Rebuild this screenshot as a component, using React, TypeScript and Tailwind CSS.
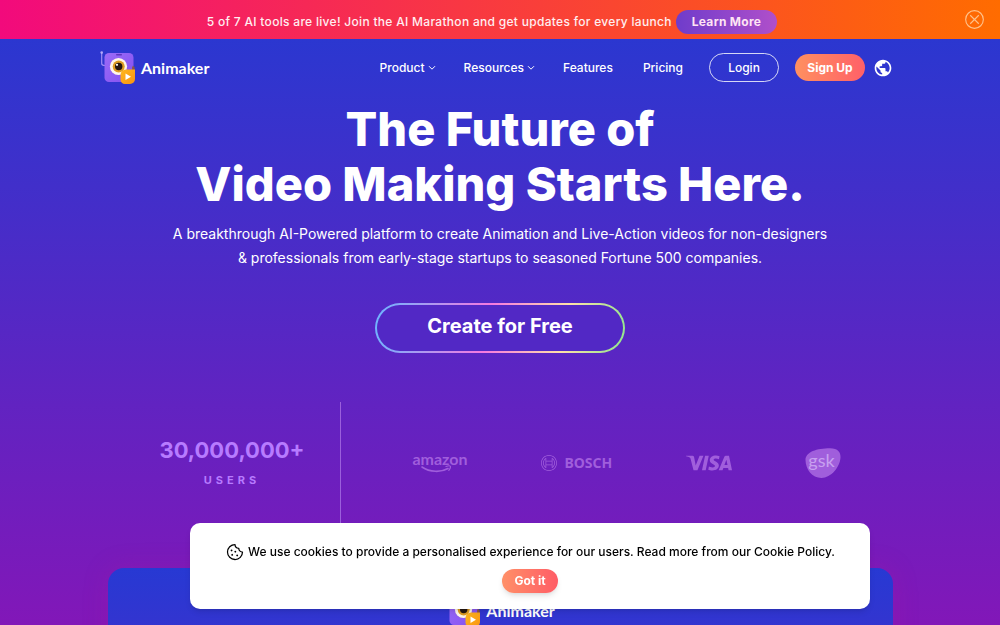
import { MdPublic } from "react-icons/md";
import { PiCookie } from "react-icons/pi";
import { SiVisa, SiBosch } from "react-icons/si";

function Chevron() {
  return (
    <svg viewBox="0 0 8 6" className="h-1.5 w-2" fill="none" stroke="currentColor" strokeWidth="1" aria-hidden="true">
      <path d="M1 1.2l3 3 3-3" />
    </svg>
  );
}

function Mascot() {
  return (
    <svg viewBox="0 0 36 36" className="size-9 shrink-0" aria-hidden="true">
      <defs>
        <linearGradient id="body" x1="0" y1="0" x2="1" y2="1">
          <stop offset="0" stopColor="#9b6bf8" />
          <stop offset="1" stopColor="#8450f0" />
        </linearGradient>
        <linearGradient id="play" x1="0" y1="0" x2="1" y2="1">
          <stop offset="0" stopColor="#ffb81c" />
          <stop offset="1" stopColor="#f99312" />
        </linearGradient>
      </defs>
      <path d="M1.7 3v10.500q0 2 3.300 2" fill="none" stroke="#9f8df5" strokeWidth="1.200" />
      <circle cx="1.700" cy="2.600" r="1.300" fill="#b5a8f8" />
      <rect x="4.500" y="3" width="29" height="29" rx="4.500" fill="url(#body)" />
      <rect x="16" y="4" width="6" height="1.500" rx=".7" fill="#5f35bd" />
      <circle cx="18.500" cy="16.500" r="8.600" fill="#fff6e8" />
      <circle cx="18.700" cy="16.500" r="6" fill="#dd9b22" />
      <circle cx="18.700" cy="16.500" r="3.700" fill="#241611" />
      <circle cx="17" cy="14.800" r="1.100" fill="#fff" />
      <path d="M33 15.500l1.600 2v3h-2.500v-3z" fill="#8a5648" />
      <path d="M26 19.500h9V29a5 5 0 0 1-5 5h-5a4.500 4.500 0 0 1-4.500-4.500V25a5.500 5.500 0 0 1 5.500-5.500z" fill="url(#play)" />
      <path d="M25.500 23.500l5.500 3.300-5.500 3.300z" fill="#fff" />
    </svg>
  );
}

function Logo() {
  return (
    <a href="#home" className="flex items-center gap-[5px] text-white">
      <Mascot />
      <span className="font-[Lato,sans-serif] text-base font-bold leading-5">Animaker</span>
    </a>
  );
}

function Amazon() {
  return (
    <div className="flex w-14 flex-col items-center" role="img" aria-label="amazon">
      <span className="font-[Lato,sans-serif] text-base leading-3 font-bold">amazon</span>
      <svg viewBox="0 0 56 8" className="h-2 w-14" fill="none" stroke="currentColor" strokeLinecap="round" aria-hidden="true">
        <path d="M10 2c8 5.500 19 5.500 26 1.500" strokeWidth="1.600" />
        <path d="M34 1.500c2-.7 4-.7 4.300-.2s-.3 2.500-1.500 4" strokeWidth="1.200" />
      </svg>
    </div>
  );
}

function Gsk() {
  return (
    <svg viewBox="0 0 36 30" className="h-[30px] w-9" role="img" aria-label="gsk">
      <path d="M.5 12C.5 4 12 .3 25 .3c8 0 10.700 4 10.500 9C35.200 19 26 30 16.500 30 7 30 .5 21 .5 12z" fill="currentColor" />
      <text x="16.500" y="19" textAnchor="middle" className="fill-[#c8a0f0] font-[Lato,sans-serif] text-[18px]">gsk</text>
    </svg>
  );
}

export default function App() {
  return (
    <div className="flex h-screen flex-col overflow-hidden bg-[#2b36cf] font-['Inter',sans-serif] text-white">
      <aside className="relative flex h-[39px] shrink-0 items-center justify-center bg-linear-to-r/srgb from-[#f20a7c] to-[#ff6c00] pt-1">
        <div className="flex items-center gap-1 pr-4">
          <p className="text-xs font-medium tracking-wide text-[#ffeef0]">
            5 of 7 AI tools are live! Join the AI Marathon and get updates for every launch
          </p>
          <a href="#marathon" className="flex h-6 items-center rounded-full bg-linear-to-r/srgb from-[#6f3ccb] to-[#b04fca] px-4 text-xs font-bold tracking-wide text-[#ffe4f4]">
            Learn More
          </a>
        </div>
        <button type="button" aria-label="Close announcement" className="absolute top-2.5 right-4">
          <svg viewBox="0 0 20 20" className="size-[19px]" fill="none" stroke="#ffc18a" strokeWidth="1.200" aria-hidden="true">
            <circle cx="10" cy="10" r="9.300" />
            <path d="M5.500 5.500l9 9m0-9l-9 9" />
          </svg>
        </button>
      </aside>

      <div className="flex min-h-0 flex-1 flex-col bg-linear-to-b/srgb from-[#2b37d0] to-[#8217b8]">
        <header className="flex h-[57px] shrink-0 items-center justify-between pr-[107px] pl-[100px]">
          <Logo />
          <nav className="flex items-center text-xs font-medium">
            <button type="button" className="mr-7 flex items-center gap-[3px]">Product <Chevron /></button>
            <button type="button" className="mr-7 flex items-center gap-[3px]">Resources <Chevron /></button>
            <a href="#features" className="mr-[30px]">Features</a>
            <a href="#pricing" className="mr-[26px]">Pricing</a>
            <a href="#login" className="mr-4 flex h-[29px] w-[70px] items-center justify-center rounded-full border border-white/80">Login</a>
            <a href="#signup" className="mr-2 flex h-[27px] w-[70px] items-center justify-center rounded-full bg-linear-to-r/srgb from-[#ff9060] to-[#ff6068] font-bold">Sign Up</a>
            <button type="button" aria-label="Language"><MdPublic className="size-5" /></button>
          </nav>
        </header>

        <main className="flex min-h-0 flex-1 flex-col">
          <section className="flex shrink-0 flex-col items-center pt-[5px] text-center">
            <h1 className="text-[47px] leading-[55px] font-extrabold">
              The Future of<br />Video Making Starts Here.
            </h1>
            <p className="mt-[11px] text-sm leading-6">
              A breakthrough AI-Powered platform to create Animation and Live-Action videos for non-designers
              <br />&amp; professionals from early-stage startups to seasoned Fortune 500 companies.
            </p>
            <a href="#create" className="mt-[33px] flex h-[50px] w-[250px] rounded-full bg-linear-[100deg,#6bb6ff,#f579e0_45%,#ffe0a8_75%,#8fe88c] p-0.5">
              <span className="flex flex-1 items-center justify-center rounded-full bg-[#5228c5] pb-1 text-xl font-bold">Create for Free</span>
            </a>
          </section>

          <section className="mx-auto mt-[49px] flex h-[132px] w-full max-w-[760px] shrink-0 text-[#a05edc]">
            <div className="flex w-[221px] shrink-0 flex-col items-center border-r border-[#9b5fdc] pt-[34px] pl-1 text-[#b77bff]">
              <p className="text-[22px] leading-7 font-bold">30,000,000+</p>
              <p className="mt-2 text-[11px] leading-4 font-bold tracking-[4px]">USERS</p>
            </div>
            <div className="flex h-[122px] flex-1 items-center justify-between pr-[39px] pl-[71px]">
              <Amazon />
              <div className="flex items-center gap-[7px]" role="img" aria-label="Bosch">
                <SiBosch className="size-4" />
                <span className="font-['Noto_Sans',sans-serif] text-sm leading-4 font-bold">BOSCH</span>
              </div>
              <SiVisa className="h-12 w-[46px]" aria-label="Visa" />
              <Gsk />
            </div>
          </section>

          <section className="mx-auto mt-[34px] flex h-[440px] w-[78.5%] shrink-0 justify-center rounded-2xl bg-linear-to-b/srgb from-[#2739d3] to-[#8217b8] pt-[25px] shadow-[0_0_24px_#b01c9c40]">
            <div><Logo /></div>
          </section>
        </main>
      </div>

      <aside aria-label="Cookie notice" className="fixed bottom-4 left-[19%] flex w-[68%] flex-col items-center rounded-[10px] bg-white pt-[19px] pb-4 text-black shadow-md">
        <p className="flex items-center gap-[3px] text-xs leading-5 font-medium">
          <PiCookie className="size-5" aria-hidden="true" />
          <span>We use cookies to provide a personalised experience for our users. Read more from our <a href="#cookies">Cookie Policy.</a></span>
        </p>
        <button type="button" className="mt-[7px] h-6 w-14 rounded-full bg-linear-to-r/srgb from-[#ff9068] to-[#ff5c66] text-xs font-bold text-white shadow-md">Got it</button>
      </aside>
    </div>
  );
}
